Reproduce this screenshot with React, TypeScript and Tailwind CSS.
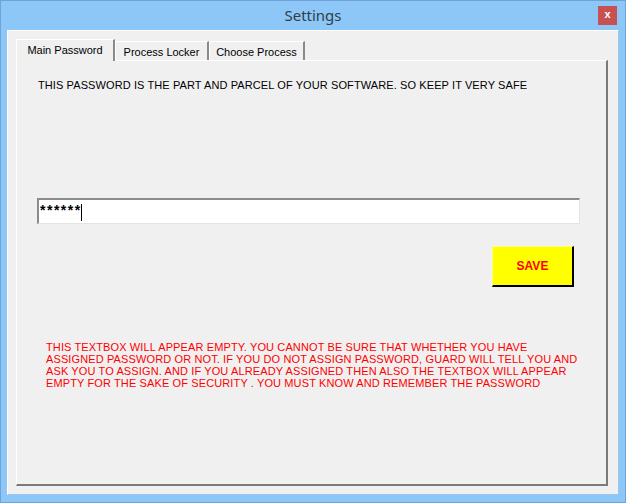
import React from "react";

export default function App() {
  const sans = { fontFamily: '"Liberation Sans", Arial, sans-serif' } as React.CSSProperties;
  return (
    <div className="w-[626px] h-[503px] bg-[#8cc7f8] border border-[#6fa3d8] flex flex-col overflow-hidden" style={sans}>
      <div className="h-[29px] relative flex items-center justify-center shrink-0">
        <span className="text-[15px] text-[#333d47]" style={{ fontFamily: '"Noto Sans", "Open Sans", sans-serif' }}>Settings</span>
        <div className="absolute left-[597px] top-[5px] w-[19px] h-[19px] bg-[#c75050] flex items-center justify-center text-white text-[11px] font-bold leading-none pb-[2px]">x</div>
      </div>
      <div className="flex-1 mx-[6px] mb-[7px] bg-[#f0f0f0] border-t border-l border-[#ffffff] border-r border-b border-r-[#9cc6ea] border-b-[#9cc6ea] pl-[8px] pt-[7px] pr-[10px] pb-[8px] flex flex-col">
        <div className="flex items-end h-[22px] shrink-0 text-[11px] text-black">
          <div className="w-[99px] h-[22px] bg-[#f0f0f0] border-t border-l border-white border-r-2 border-r-[#8a8a8a] flex items-start justify-center pt-[2px] -mb-[1px] relative z-10">
            Main Password
          </div>
          <div className="w-[94px] h-[19px] bg-[#f0f0f0] border-t border-l border-white border-r-2 border-r-[#8a8a8a] flex items-start justify-center pt-[2px]">
            Process Locker
          </div>
          <div className="w-[96px] h-[19px] bg-[#f0f0f0] border-t border-l border-white border-r-2 border-r-[#8a8a8a] flex items-start justify-center pt-[2px]">
            Choose Process
          </div>
        </div>
        <div className="flex-1 bg-[#f0f0f0] border-t border-l border-white border-r-2 border-b-2 border-r-[#7a7a7a] border-b-[#7a7a7a] flex flex-col pt-[18px]">
          <p className="ml-[21px] text-[11px] leading-[13px] text-black whitespace-nowrap tracking-[0.1px]">
            THIS PASSWORD IS THE PART AND PARCEL OF YOUR SOFTWARE. SO KEEP IT VERY SAFE
          </p>
          <div className="ml-[20px] mt-[106px] w-[543px] h-[26px] bg-white border-t-2 border-l-2 border-t-[#8c8c8c] border-l-[#8c8c8c] border-b border-r border-b-[#e3e3e3] border-r-[#e3e3e3] flex items-start pl-[1px] pt-[1px]">
            <span className="text-[14px] font-bold leading-[16px] text-black tracking-[1.5px] mt-[1px]">******</span>
            <span className="w-[1px] h-[17px] bg-black ml-[-1px] mt-[3px]" />
          </div>
          <div className="ml-[475px] mt-[22px] w-[82px] h-[41px] bg-[#ffff00] border-t border-l border-t-[#ffff80] border-l-[#ffff80] border-r-2 border-b-2 border-black flex items-center justify-center">
            <span className="text-[12px] font-bold text-[#ff0000]">SAVE</span>
          </div>
          <p className="ml-[29px] mt-[54px] text-[11px] leading-[12px] text-[#ff0000] whitespace-nowrap tracking-[0.12px]">
            THIS TEXTBOX WILL APPEAR EMPTY. YOU CANNOT BE SURE THAT WHETHER YOU HAVE
            <br />
            ASSIGNED PASSWORD OR NOT. IF YOU DO NOT ASSIGN PASSWORD, GUARD WILL TELL YOU AND
            <br />
            ASK YOU TO ASSIGN. AND IF YOU ALREADY ASSIGNED THEN ALSO THE TEXTBOX WILL APPEAR
            <br />
            EMPTY FOR THE SAKE OF SECURITY . YOU MUST KNOW AND REMEMBER THE PASSWORD
          </p>
        </div>
      </div>
    </div>
  );
}
